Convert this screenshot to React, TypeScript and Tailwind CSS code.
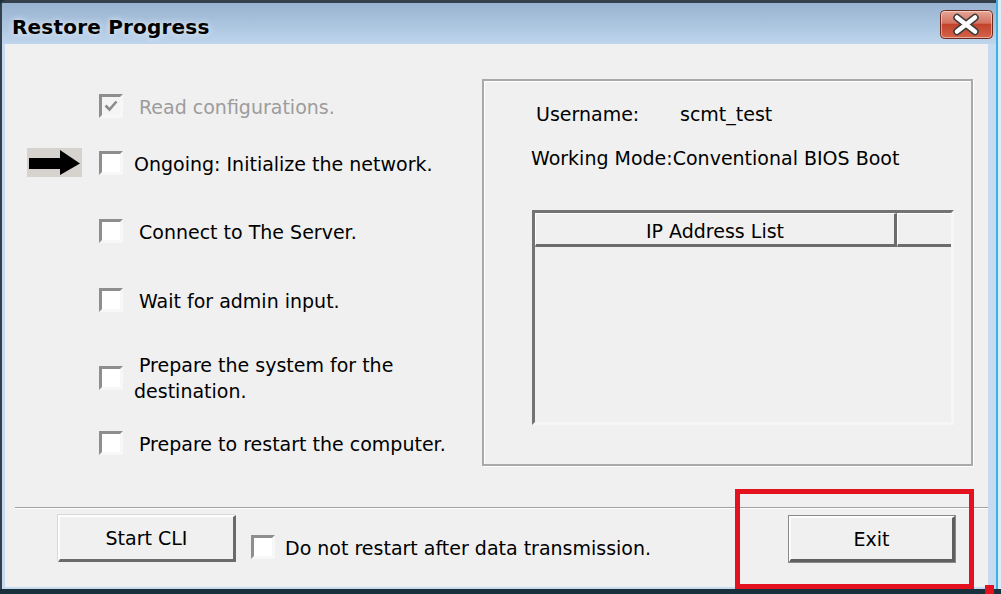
import React from "react";

function Check({ checked = false, disabled = false }: { checked?: boolean; disabled?: boolean }) {
  return (
    <div
      className={
        "relative w-[24px] h-[24px] flex-none border-[3px] border-t-[#8e8e8e] border-l-[#8e8e8e] border-b-[#f7f7f7] border-r-[#f7f7f7] " +
        (disabled ? "bg-[#f4f4f4]" : "bg-white")
      }
    >
      {checked && (
        <svg width="18" height="18" viewBox="0 0 18 18" className="absolute left-0 top-0">
          <path d="M3.5 8.5 L7.5 12.5 L14.5 4.5" fill="none" stroke="#8a8a8a" strokeWidth="2.6" />
        </svg>
      )}
    </div>
  );
}

function Arrow() {
  return (
    <div className="w-[55px] h-[29px] flex-none bg-[#d6d3ce]">
      <svg width="55" height="29" viewBox="0 0 55 29">
        <rect x="2" y="10" width="32" height="11" fill="#000" />
        <polygon points="33,2 53,15.5 33,27" fill="#000" />
      </svg>
    </div>
  );
}

function Row({
  arrow = false,
  text,
  lead = true,
  checked = false,
  disabled = false,
  className = "",
}: {
  arrow?: boolean;
  text: React.ReactNode;
  lead?: boolean;
  checked?: boolean;
  disabled?: boolean;
  className?: string;
}) {
  return (
    <div className={"flex items-center " + className}>
      {arrow ? <Arrow /> : <div className="w-[55px] flex-none" />}
      <div className="ml-[17px]">
        <Check checked={checked} disabled={disabled} />
      </div>
      <div
        className={
          "ml-[11px] leading-[26px] mt-[2px] " +
          (lead ? "pl-[5px] " : "") +
          (disabled ? "text-[#9c9c9c]" : "text-black")
        }
      >
        {text}
      </div>
    </div>
  );
}

function CloseButton() {
  return (
    <svg width="53" height="29" viewBox="0 0 53 29">
      <defs>
        <linearGradient id="cg" x1="0" y1="0" x2="0" y2="1">
          <stop offset="0" stopColor="#e6a898" />
          <stop offset="0.45" stopColor="#d47260" />
          <stop offset="0.5" stopColor="#c2432c" />
          <stop offset="1" stopColor="#d6644a" />
        </linearGradient>
      </defs>
      <rect x="0.5" y="0.5" width="52" height="28" rx="4" fill="url(#cg)" stroke="#6b2a20" />
      <rect x="1.5" y="1.5" width="50" height="26" rx="3" fill="none" stroke="rgba(255,255,255,0.45)" />
      <path d="M17 7.5 L35 21.5 M35 7.5 L17 21.5" stroke="#3b3b3b" strokeWidth="7.5" strokeLinecap="round" />
      <path d="M17 7.5 L35 21.5 M35 7.5 L17 21.5" stroke="#ffffff" strokeWidth="4.5" strokeLinecap="round" />
    </svg>
  );
}

export default function App() {
  return (
    <div className="w-[1001px] h-[594px] relative overflow-hidden bg-[#17303c] font-['DejaVu_Sans',sans-serif] text-[19px] text-black">
      <div className="flex h-[589px]">
        <div className="w-[996px] flex-none flex flex-col rounded-tl-[6px] border-l-[2px] border-t-[3px] border-[#34404c] bg-[#c6dbf0]">
          {/* title bar */}
          <div className="h-[41px] flex-none flex items-start bg-gradient-to-b from-[#97b2d0] to-[#bed5ec] pl-[10px] pr-[3px]">
            <span className="mt-[12px] text-[20px] leading-[24px] font-bold tracking-[0.2px] text-[#000] [text-shadow:0_0_6px_rgba(255,255,255,0.8)]">
              Restore Progress
            </span>
            <div className="ml-auto mt-[7px]">
              <CloseButton />
            </div>
          </div>
          {/* client */}
          <div className="flex-1 flex mb-[2px]">
            <div className="w-[983px] ml-[3px] flex-none bg-[#f0f0f0] flex flex-col">
              <div className="flex pt-[35px]">
                <div className="w-[477px] flex-none pt-[14px] pl-[22px] flex flex-col">
                  <Row className="h-[26px]" text="Read configurations." checked disabled />
                  <Row className="h-[29px] mt-[29px]" arrow lead={false} text="Ongoing: Initialize the network." />
                  <Row className="h-[26px] mt-[41px]" text="Connect to The Server." />
                  <Row className="h-[26px] mt-[43px]" text="Wait for admin input." />
                  <div className="flex items-center h-[52px] mt-[39px]">
                    <div className="w-[55px] flex-none" />
                    <div className="ml-[17px]">
                      <Check />
                    </div>
                    <div className="ml-[11px] leading-[26px]">
                      <div className="pl-[5px]">Prepare the system for the</div>
                      <div>destination.</div>
                    </div>
                  </div>
                  <Row className="h-[26px] mt-[26px]" text="Prepare to restart the computer." />
                </div>
                {/* group box */}
                <div className="w-[491px] h-[387px] flex-none border-2 border-[#a9a9a9] shadow-[inset_1px_1px_0_#ffffff,1px_1px_0_#ffffff] flex flex-col">
                  <div className="flex pl-[52px] pt-[21px] leading-[24px]">
                    <span className="w-[144px]">Username:</span>
                    <span>scmt_test</span>
                  </div>
                  <div className="pl-[47px] mt-[20px] leading-[24px]">Working Mode:Conventional BIOS Boot</div>
                  <div className="ml-[48px] mt-[40px] w-[422px] h-[215px] border-[3px] border-t-[#737373] border-l-[#737373] border-b-[#f6f6f6] border-r-[#f6f6f6] bg-[#f0f0f0] flex flex-col">
                    <div className="flex h-[34px] flex-none">
                      <div className="w-[362px] flex-none flex items-center justify-center pt-[3px] border-t border-l border-white border-b-[3px] border-b-[#6c6c6c] border-r-[3px] border-r-[#6c6c6c] leading-[24px]">
                        IP Address List
                      </div>
                      <div className="flex-1 border-t border-l border-white border-b-[3px] border-b-[#6c6c6c]" />
                    </div>
                    <div className="flex-1" />
                  </div>
                </div>
              </div>
              {/* separator */}
              <div className="mt-[41px] ml-[10px] h-[2px] border-t border-[#a0a0a0] border-b border-b-white" />
              {/* bottom bar */}
              <div className="mt-[6px] flex items-start">
                <div className="ml-[53px] w-[178px] h-[47px] flex-none flex items-center justify-center bg-[#f0f0f0] border-t-[2px] border-l-[2px] border-t-[#fdfdfd] border-l-[#fdfdfd] border-b-[3px] border-r-[3px] border-b-[#6a6a6a] border-r-[#6a6a6a] shadow-[-1px_-1px_0_#d8d8d8] leading-[24px]">
                  Start CLI
                </div>
                <div className="ml-[15px] mt-[18px] flex items-center">
                  <Check />
                  <span className="ml-[10px] mt-[3px] leading-[24px]">Do not restart after data transmission.</span>
                </div>
                <div className="ml-auto mr-[32px] w-[168px] h-[48px] flex-none border border-[#8a8a8a]">
                  <div className="w-full h-full flex items-center justify-center bg-[#f0f0f0] border-t-[2px] border-l-[2px] border-t-[#fdfdfd] border-l-[#fdfdfd] border-b-[3px] border-r-[3px] border-b-[#5f5f5f] border-r-[#5f5f5f] leading-[24px]">
                    Exit
                  </div>
                </div>
              </div>
            </div>
          </div>
        </div>
        <div className="w-[2px] flex-none bg-[#3cb0e3]" />
        <div className="w-[3px] flex-none bg-[#d9ecf8]" />
      </div>
      {/* annotation overlays */}
      <div className="absolute left-[735px] top-[489px] w-[239px] h-[100px] border-[5px] border-[#e3121e]" />
      <div className="absolute left-[985px] top-[585px] w-[9px] h-[9px] bg-[#e3121e]" />
    </div>
  );
}
